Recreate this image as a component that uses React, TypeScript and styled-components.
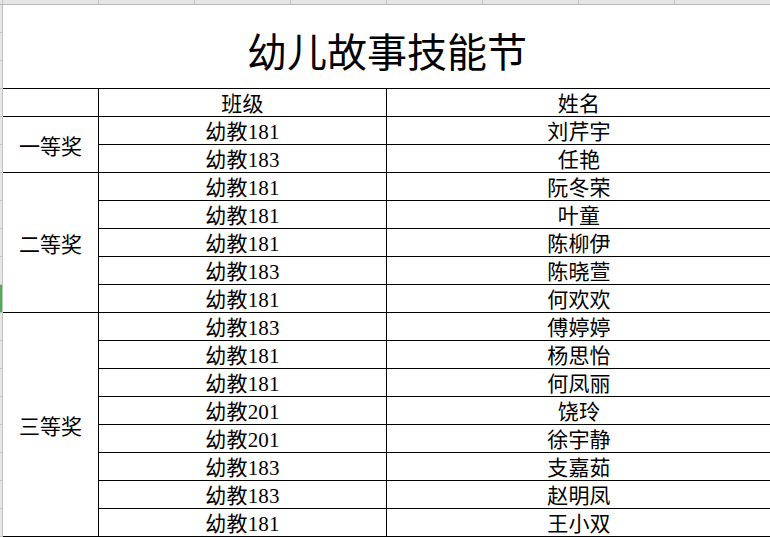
import React from "react";
import styled, { createGlobalStyle } from "styled-components";

const Global = createGlobalStyle`
  html, body { margin: 0; padding: 0; background: #ffffff; overflow: hidden; }
  body { font-family: "Liberation Serif", "Noto Sans CJK SC", serif; color: #000; }
`;

const Frame = styled.div`
  width: 770px;
  height: 537px;
  overflow: hidden;
  display: flex;
  flex-direction: column;
  background: #fff;
`;

const ColBar = styled.div`
  display: flex;
  flex: none;
  height: 5px;
  box-sizing: border-box;
  background: #e6e6e6;
  border-bottom: 1px solid #b9b9b9;
`;

const ColTick = styled.div<{ $w: number }>`
  flex: none;
  width: ${(p) => p.$w}px;
  box-sizing: border-box;
  border-right: 1px solid #c3c3c3;
`;

const Body = styled.div`
  display: flex;
  flex: 1;
  min-height: 0;
`;

const RowBar = styled.div`
  flex: none;
  width: 3px;
  display: flex;
  flex-direction: column;
  box-sizing: border-box;
  background: #e6e6e6;
  border-right: 1px solid #c3c3c3;
`;

const RowTick = styled.div<{ $sel?: boolean }>`
  flex: none;
  height: 28px;
  box-sizing: border-box;
  border-bottom: 1px solid #c3c3c3;
  background: ${(p) => (p.$sel ? "#4caf50" : "transparent")};
`;

const Sheet = styled.div`
  display: grid;
  grid-template-columns: 96px 288px 384px;
  grid-template-rows: 84px;
  grid-auto-rows: 28px;
`;

const Title = styled.div`
  grid-column: 1 / -1;
  box-sizing: border-box;
  border-bottom: 1px solid #000;
  display: flex;
  align-items: center;
  justify-content: center;
  padding-top: 7px;
  font-family: "Noto Sans CJK SC", sans-serif;
  font-size: 40px;
  line-height: 1;
`;

const Cell = styled.div<{ $right?: boolean }>`
  box-sizing: border-box;
  border-bottom: 1px solid #000;
  border-right: ${(p) => (p.$right ? "1px solid #000" : "none")};
  display: flex;
  align-items: flex-end;
  justify-content: center;
  font-size: 21px;
  line-height: 24px;
  padding-bottom: 0;
  letter-spacing: 0.2px;
  white-space: nowrap;
`;

const AwardCell = styled.div<{ $span: number }>`
  grid-column: 1;
  grid-row: span ${(p) => p.$span};
  box-sizing: border-box;
  border-bottom: 1px solid #000;
  border-right: 1px solid #000;
  display: flex;
  align-items: center;
  justify-content: center;
  padding-top: 5px;
  font-size: 21px;
  line-height: 24px;
  white-space: nowrap;
`;

type Group = { award: string; rows: [string, string][] };

const groups: Group[] = [
  {
    award: "一等奖",
    rows: [
      ["幼教181", "刘芹宇"],
      ["幼教183", "任艳"],
    ],
  },
  {
    award: "二等奖",
    rows: [
      ["幼教181", "阮冬荣"],
      ["幼教181", "叶童"],
      ["幼教181", "陈柳伊"],
      ["幼教183", "陈晓萱"],
      ["幼教181", "何欢欢"],
    ],
  },
  {
    award: "三等奖",
    rows: [
      ["幼教183", "傅婷婷"],
      ["幼教181", "杨思怡"],
      ["幼教181", "何凤丽"],
      ["幼教201", "饶玲"],
      ["幼教201", "徐宇静"],
      ["幼教183", "支嘉茹"],
      ["幼教183", "赵明凤"],
      ["幼教181", "王小双"],
    ],
  },
];

const colWidths = [3, 96, 96, 96, 96, 96, 96, 96, 96];
const rowCount = 20;
const selectedRow = 10;

export default function App() {
  return (
    <>
      <Global />
      <Frame>
        <ColBar>
          {colWidths.map((w, i) => (
            <ColTick key={i} $w={w} />
          ))}
        </ColBar>
        <Body>
          <RowBar>
            {Array.from({ length: rowCount }, (_, i) => (
              <RowTick key={i} $sel={i === selectedRow} />
            ))}
          </RowBar>
          <Sheet>
            <Title>幼儿故事技能节</Title>
            <Cell $right />
            <Cell $right>班级</Cell>
            <Cell>姓名</Cell>
            {groups.map((g) => (
              <React.Fragment key={g.award}>
                <AwardCell $span={g.rows.length}>{g.award}</AwardCell>
                {g.rows.map(([cls, name]) => (
                  <React.Fragment key={name}>
                    <Cell $right>{cls}</Cell>
                    <Cell>{name}</Cell>
                  </React.Fragment>
                ))}
              </React.Fragment>
            ))}
          </Sheet>
        </Body>
      </Frame>
    </>
  );
}
